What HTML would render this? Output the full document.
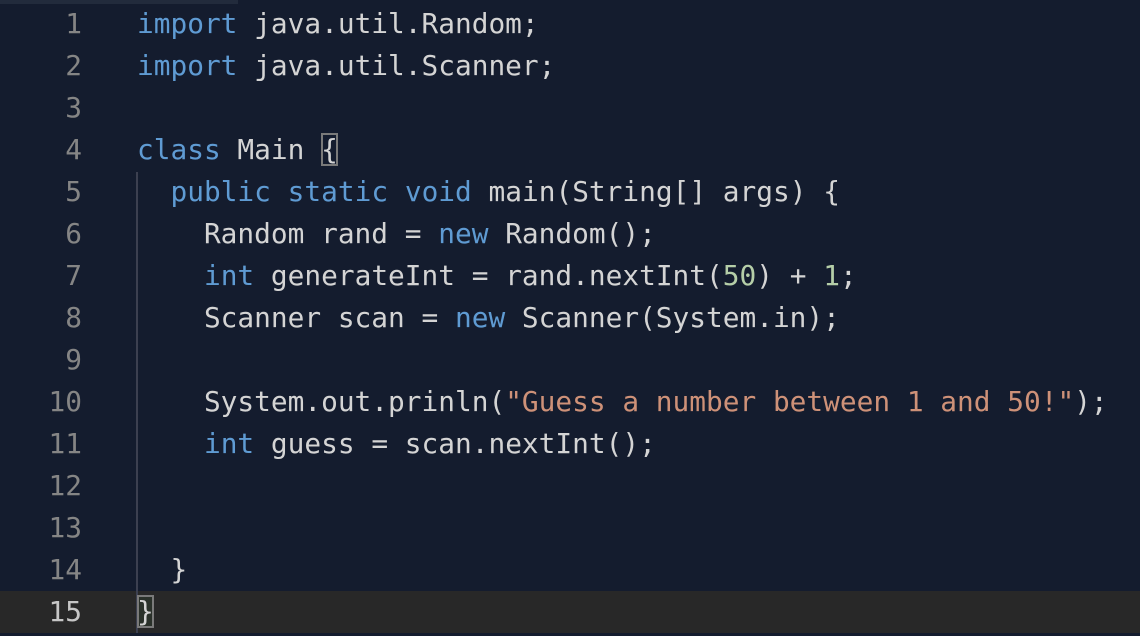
<!DOCTYPE html>
<html><head><meta charset="utf-8"><style>
html,body{margin:0;padding:0;background:#141c2e;width:1140px;height:636px;overflow:hidden;}
.top{position:absolute;left:0;top:0;width:238px;height:4px;background:#222b3c;}
.cur{position:absolute;left:0;top:591px;width:1140px;height:42px;background:#282828;}
.guide{position:absolute;left:136px;top:172px;width:2px;height:461px;background:#3c4050;}
.ln{position:absolute;left:0;width:82px;text-align:right;color:#858585;}
.code{position:absolute;left:137px;top:0;color:#d4d4d4;}
.row{font-family:"DejaVu Sans Mono","Liberation Mono",monospace;font-size:27.8px;line-height:42px;height:42px;white-space:pre;}
.k{color:#5f9bd3}.s{color:#ce9178}.n{color:#b5cea8}
.br{outline:2px solid #7a7a7a;outline-offset:-2px;}
.br2{outline:2px solid #7a7a7a;outline-offset:-2px;background:#2a312a;}
</style></head><body>
<div class="top"></div>
<div class="cur"></div>
<div class="guide"></div>
<div style="position:absolute;top:3px;left:0;width:1140px">
<div class="ln">
<div class="row">1</div><div class="row">2</div><div class="row">3</div><div class="row">4</div><div class="row">5</div><div class="row">6</div><div class="row">7</div><div class="row">8</div><div class="row">9</div><div class="row">10</div><div class="row">11</div><div class="row">12</div><div class="row">13</div><div class="row">14</div><div class="row" style="color:#c6c6c6">15</div>
</div>
<div class="code"><div class="row"><span class="k">import</span> java.util.Random;</div><div class="row"><span class="k">import</span> java.util.Scanner;</div><div class="row"> </div><div class="row"><span class="k">class</span> Main <span class="br">{</span></div><div class="row">  <span class="k">public</span> <span class="k">static</span> <span class="k">void</span> main(String[] args) {</div><div class="row">    Random rand = <span class="k">new</span> Random();</div><div class="row">    <span class="k">int</span> generateInt = rand.nextInt(<span class="n">50</span>) + <span class="n">1</span>;</div><div class="row">    Scanner scan = <span class="k">new</span> Scanner(System.in);</div><div class="row"> </div><div class="row">    System.out.prinln(<span class="s">"Guess a number between 1 and 50!"</span>);</div><div class="row">    <span class="k">int</span> guess = scan.nextInt();</div><div class="row"> </div><div class="row"> </div><div class="row">  }</div><div class="row"><span class="br2">}</span></div></div>
</div>
</body></html>
